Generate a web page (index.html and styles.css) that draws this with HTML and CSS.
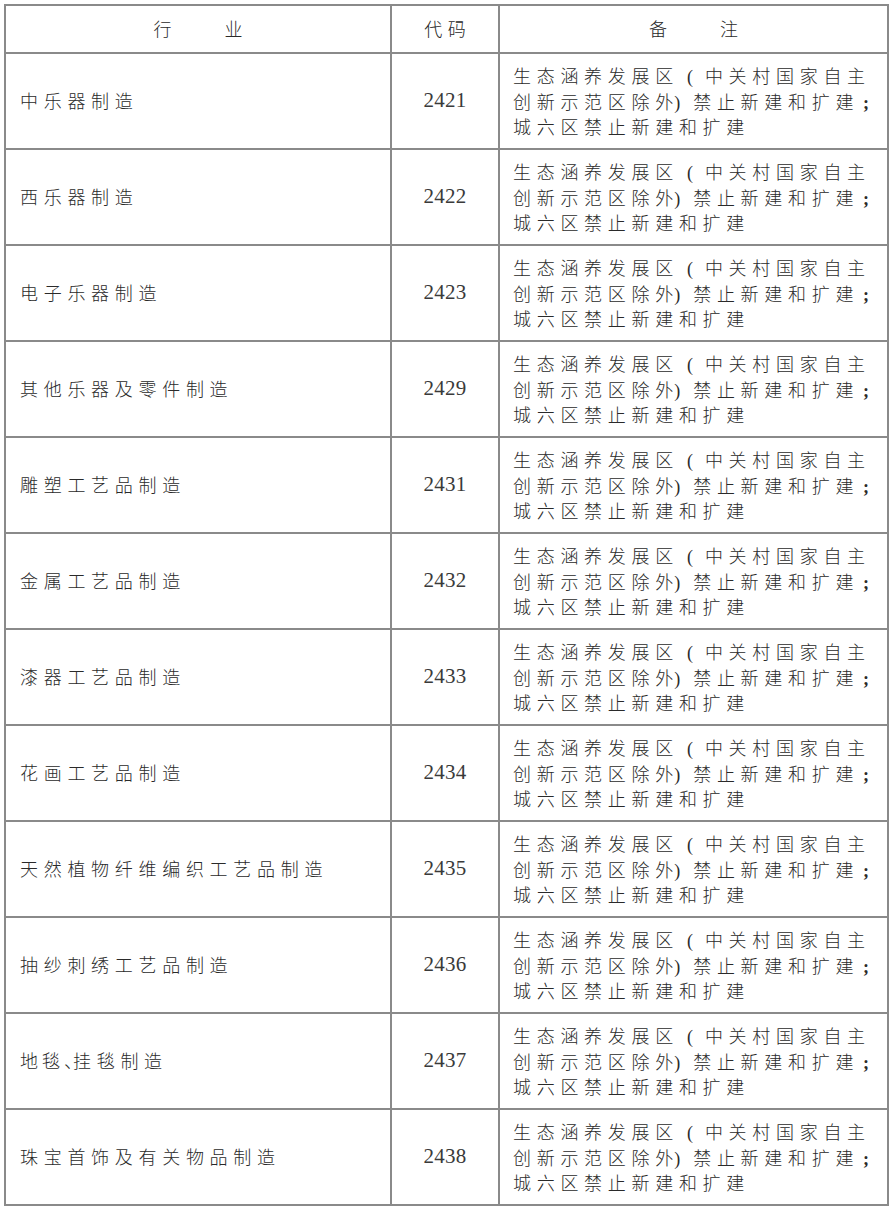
FILE: index.html
```html
<!DOCTYPE html>
<html lang="zh">
<head>
<meta charset="utf-8">
<title>行业目录</title>
<link rel="stylesheet" href="styles.css">
</head>
<body>
<table class="grid">
  <colgroup>
    <col class="c-name">
    <col class="c-code">
    <col class="c-note">
  </colgroup>
  <thead>
    <tr class="head">
      <th class="h-name">行　　业</th>
      <th class="h-code">代码</th>
      <th class="h-note">备　　注</th>
    </tr>
  </thead>
  <tbody>
    <tr><td class="name">中乐器制造</td><td class="code">2421</td><td class="note">生态涵养发展区<span class="lp">(</span>中关村国家自主<br>创新示范区除<span class="pre-rp">外</span><span class="rp">)</span>禁止新建和扩建<span class="sc">;</span><br>城六区禁止新建和扩建</td></tr>
    <tr><td class="name">西乐器制造</td><td class="code">2422</td><td class="note">生态涵养发展区<span class="lp">(</span>中关村国家自主<br>创新示范区除<span class="pre-rp">外</span><span class="rp">)</span>禁止新建和扩建<span class="sc">;</span><br>城六区禁止新建和扩建</td></tr>
    <tr><td class="name">电子乐器制造</td><td class="code">2423</td><td class="note">生态涵养发展区<span class="lp">(</span>中关村国家自主<br>创新示范区除<span class="pre-rp">外</span><span class="rp">)</span>禁止新建和扩建<span class="sc">;</span><br>城六区禁止新建和扩建</td></tr>
    <tr><td class="name">其他乐器及零件制造</td><td class="code">2429</td><td class="note">生态涵养发展区<span class="lp">(</span>中关村国家自主<br>创新示范区除<span class="pre-rp">外</span><span class="rp">)</span>禁止新建和扩建<span class="sc">;</span><br>城六区禁止新建和扩建</td></tr>
    <tr><td class="name">雕塑工艺品制造</td><td class="code">2431</td><td class="note">生态涵养发展区<span class="lp">(</span>中关村国家自主<br>创新示范区除<span class="pre-rp">外</span><span class="rp">)</span>禁止新建和扩建<span class="sc">;</span><br>城六区禁止新建和扩建</td></tr>
    <tr><td class="name">金属工艺品制造</td><td class="code">2432</td><td class="note">生态涵养发展区<span class="lp">(</span>中关村国家自主<br>创新示范区除<span class="pre-rp">外</span><span class="rp">)</span>禁止新建和扩建<span class="sc">;</span><br>城六区禁止新建和扩建</td></tr>
    <tr><td class="name">漆器工艺品制造</td><td class="code">2433</td><td class="note">生态涵养发展区<span class="lp">(</span>中关村国家自主<br>创新示范区除<span class="pre-rp">外</span><span class="rp">)</span>禁止新建和扩建<span class="sc">;</span><br>城六区禁止新建和扩建</td></tr>
    <tr><td class="name">花画工艺品制造</td><td class="code">2434</td><td class="note">生态涵养发展区<span class="lp">(</span>中关村国家自主<br>创新示范区除<span class="pre-rp">外</span><span class="rp">)</span>禁止新建和扩建<span class="sc">;</span><br>城六区禁止新建和扩建</td></tr>
    <tr><td class="name">天然植物纤维编织工艺品制造</td><td class="code">2435</td><td class="note">生态涵养发展区<span class="lp">(</span>中关村国家自主<br>创新示范区除<span class="pre-rp">外</span><span class="rp">)</span>禁止新建和扩建<span class="sc">;</span><br>城六区禁止新建和扩建</td></tr>
    <tr><td class="name">抽纱刺绣工艺品制造</td><td class="code">2436</td><td class="note">生态涵养发展区<span class="lp">(</span>中关村国家自主<br>创新示范区除<span class="pre-rp">外</span><span class="rp">)</span>禁止新建和扩建<span class="sc">;</span><br>城六区禁止新建和扩建</td></tr>
    <tr><td class="name"><span class="pre-comma">地毯</span><span class="comma">、</span>挂毯制造</td><td class="code">2437</td><td class="note">生态涵养发展区<span class="lp">(</span>中关村国家自主<br>创新示范区除<span class="pre-rp">外</span><span class="rp">)</span>禁止新建和扩建<span class="sc">;</span><br>城六区禁止新建和扩建</td></tr>
    <tr><td class="name">珠宝首饰及有关物品制造</td><td class="code">2438</td><td class="note">生态涵养发展区<span class="lp">(</span>中关村国家自主<br>创新示范区除<span class="pre-rp">外</span><span class="rp">)</span>禁止新建和扩建<span class="sc">;</span><br>城六区禁止新建和扩建</td></tr>
  </tbody>
</table>
</body>
</html>
```

FILE: styles.css
```css
html, body {
  margin: 0;
  padding: 0;
  background: #ffffff;
}

body {
  padding: 4px 0 0 4px;
  font-family: "Noto Sans CJK SC", "Noto Sans CJK TC", sans-serif;
  color: #2a2a2a;
}

.grid {
  border-collapse: collapse;
  table-layout: fixed;
  width: 883px;
  border: 2px solid #2b2b2b;
}

.c-name { width: 386px; }
.c-code { width: 108px; }
.c-note { width: 389px; }

.grid th,
.grid td {
  border: 2px solid #8a8a8a;
  padding: 0;
  vertical-align: middle;
  font-weight: 300;
  font-size: 18px;
  letter-spacing: 5.7px;
  line-height: 23.5px;
}

.head {
  height: 48px;
}

.head th {
  text-align: center;
  padding-left: 5.7px;
  padding-bottom: 1px;
}

tbody tr {
  height: 96px;
}

.name {
  text-align: left;
  padding-left: 14px !important;
}

.pre-comma {
  letter-spacing: 4px;
}

.comma {
  letter-spacing: -9px;
}

.code {
  text-align: center;
  font-family: "Liberation Serif", "DejaVu Serif", serif;
  font-size: 21px !important;
  letter-spacing: 0.3px !important;
  font-weight: 400 !important;
  color: #3a3a3a;
}

.note {
  text-align: left;
  padding-left: 13px !important;
  padding-top: 1px !important;
  white-space: nowrap;
}

.lp {
  margin-left: 8px;
  letter-spacing: 12px;
  font-family: "Liberation Serif", serif;
}

.pre-rp {
  letter-spacing: 1px;
}

.rp {
  letter-spacing: 13px;
  font-family: "Liberation Serif", serif;
}

.sc {
  margin-left: 4px;
  letter-spacing: 0;
  font-family: "Liberation Serif", serif;
  font-weight: 700;
}
```
